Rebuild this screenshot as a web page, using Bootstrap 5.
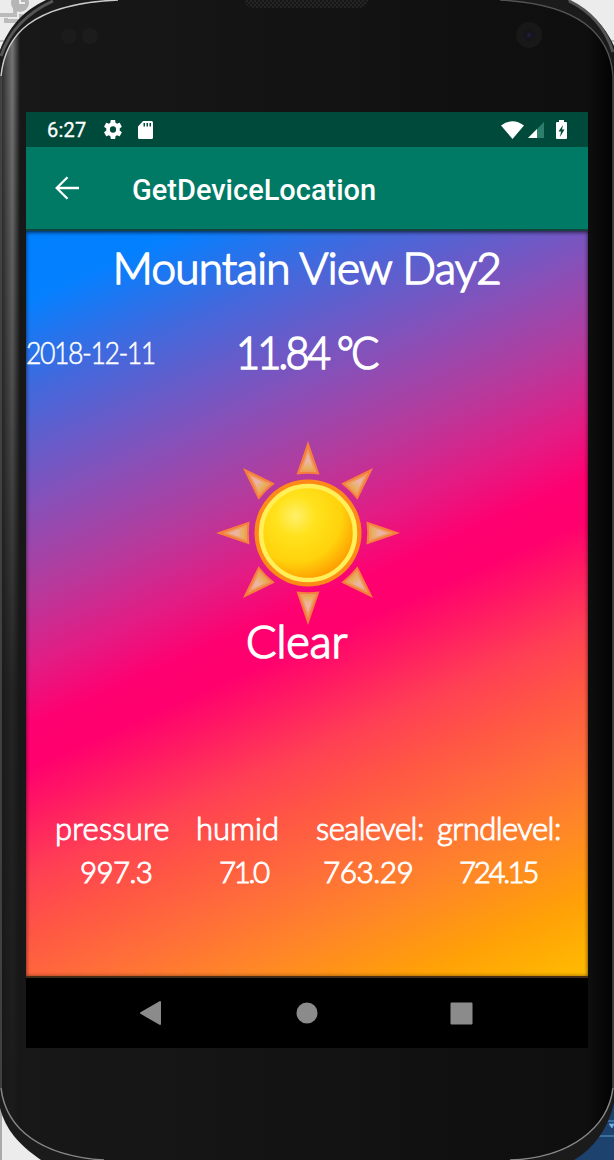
<!DOCTYPE html>
<html lang="en">
<head>
<meta charset="utf-8">
<title>GetDeviceLocation</title>
<link href="https://cdn.jsdelivr.net/npm/bootstrap@5.3.0/dist/css/bootstrap.min.css" rel="stylesheet">
<style>
body{margin:0;width:614px;height:1160px;background:#111;font-family:Roboto,"Liberation Sans",sans-serif}
.device{width:614px;height:1160px;padding:112px 26px 0}
.shell{left:0;top:0;z-index:0}
.screen{width:562px;height:936px;z-index:1;background:#000}
.statusbar{height:35px;background:#004a3b;padding:0 21px 0 21px}
.clock{font-size:20px;-webkit-text-stroke:.3px #fff;line-height:35px;width:57px;padding-top:1px;letter-spacing:.2px}
.appbar{height:82px;background:#007965;padding-left:28px}
.apptitle{font-size:29px;font-weight:500;line-height:82px;margin-left:52px;padding-top:3px}
.weather{height:749px;padding-top:6px;border-top:2px solid #14443f;border-bottom:2px solid #442d18;color:#fff;font-family:Lato,"Noto Sans",sans-serif;font-weight:300;
background:linear-gradient(156deg,#0080ff 0,#0480ff 7%,#4269dd 16%,#8750b8 28%,#b33c9e 36%,#e21c84 44%,#ff0070 50%,#ff006e 54%,#ff1664 58%,#ff4054 65%,#ff5744 71%,#ff6d3a 77%,#ff8628 84%,#ffa008 92%,#ffbc00 100%);
box-shadow:inset 0 2px 4px -1px #0009,inset 0 0 4px #0006}
.weather span{display:inline-block;white-space:nowrap;transform-origin:0 50%}
.hand{-webkit-text-stroke:1.7px #fff}
.place{font-size:44px;line-height:60px;height:64px}
.place span{letter-spacing:-.65px}
.readings{height:92px;padding-top:9px}
.date{font-size:31px;line-height:64px;width:210px;-webkit-text-stroke:.5px #fff}
.date span{letter-spacing:-1.7px;transform:scaleX(.86)}
.temp{font-size:46px;line-height:62px}
.temp span{letter-spacing:-3px;transform:scaleX(.9)}
.sun{width:184px;height:184px;margin:48px 0 0 190px}
.sky{font-size:45px;line-height:50px;height:50px;margin-top:-9px;padding-left:220px}
.stats{margin-top:140px;height:90px;font-size:31px;-webkit-text-stroke:1px #fff}
.stats .pressure{letter-spacing:.2px}
.stats .level{letter-spacing:-.55px}
.stats .val{font-size:29.500px}
.stats .val span{letter-spacing:-.6px}
.stats .val .wide{letter-spacing:-.5px;transform:scaleX(1.010)}
.stats .val .slim{letter-spacing:-2.400px}
.stats div div{height:44px;line-height:44px}
.navkeys{height:70px}
</style>
</head>
<body>
<main class="device position-relative overflow-hidden">
<svg class="shell position-absolute" width="614" height="1160" viewBox="0 0 614 1160">
<defs>
<linearGradient id="face"><stop offset="0" stop-color="#181818"/><stop offset="1" stop-color="#0e0e0e"/></linearGradient>
<linearGradient id="side"><stop offset="0" stop-color="#292929"/><stop offset=".6" stop-color="#777"/><stop offset="1" stop-color="#181818"/></linearGradient>
<linearGradient id="fade" x2="0" y2="1"><stop offset="0" stop-color="#161616" stop-opacity="0"/><stop offset=".25" stop-color="#161616" stop-opacity=".3"/><stop offset=".6" stop-color="#161616" stop-opacity=".85"/><stop offset="1" stop-color="#161616" stop-opacity=".95"/></linearGradient>
<linearGradient id="right"><stop offset="0" stop-color="#0e0e0e"/><stop offset="1" stop-color="#020202"/></linearGradient>
<pattern id="mesh" width="4" height="4" patternUnits="userSpaceOnUse"><rect width="4" height="4" fill="#242424"/><circle cx="1" cy="1" r="1" fill="#111"/><circle cx="3" cy="3" r="1" fill="#111"/></pattern>
</defs>
<rect width="614" height="1160" fill="#ececec"/>
<path d="M0 15H15V0M6 18V21H21V14" fill="none" stroke="#bbb" stroke-width="4"/>
<circle cx="20" cy="3" r="9" fill="#b5b5b5"/><path d="M20-2V3H25" stroke="#eee" stroke-width="2" fill="none"/>
<path d="M0 41H6M608 41H614" stroke="#888"/>
<path d="M560 1100H614V1160H560Z" fill="#1d426d"/><path d="M600 1121H614M595 1136H614M609 1124H614L612 1128Z" stroke="#5d9ad5" fill="#8dbce9"/>
<path d="M0 1100H2V1160H0Z" fill="#aaa"/>
<path d="M0 50C8 29 22 11 46 0H568C590 10 605 26 614 46V1103C608 1129 594 1148 574 1160H41C18 1144 6 1130 0 1108Z" fill="#1b1b1b"/>
<path d="M1 56C9 32 27 13 53 1M569 1C592 12 606 30 613 52" fill="none" stroke="#555" stroke-width="3"/>
<path d="M1 76C5 36 30 4 118 0H500C580 4 610 34 613 76V1088C608 1128 570 1158 510 1160H104C42 1156 6 1130 1 1088Z" fill="url(#face)"/>
<path d="M1 76C2 57 9 43 20 31V1129C9 1116 3 1103 1 1088Z" fill="url(#side)"/>
<path d="M1 76C2 57 9 43 20 31V1129C9 1116 3 1103 1 1088Z" fill="url(#fade)"/>
<path d="M588 26C605 38 611 55 613 76V1088C610 1105 603 1120 588 1134Z" fill="url(#right)"/>
<path d="M1 76C5 36 30 4 118 0" fill="none" stroke="#ccc" stroke-width="1.5"/>
<path d="M500 0C580 4 610 34 613 76V1088M1 76V1088" fill="none" stroke="#555" stroke-width="1.3"/>
<path d="M1 1088C6 1130 42 1156 104 1160M510 1160C570 1158 608 1128 613 1088" fill="none" stroke="#888" stroke-width="1.5"/>
<path d="M244 0H368Q366 8 358 8H254Q246 8 244 0Z" fill="url(#mesh)"/>
<circle cx="69" cy="36" r="8" fill="#1b1b1b"/><circle cx="90" cy="36" r="8" fill="#1c1c1c"/>
<circle cx="529" cy="35" r="13" fill="#181818"/><circle cx="529" cy="35" r="6" fill="#15151b"/><circle cx="529" cy="35" r="2" fill="#201a3d"/>
</svg>
<section class="screen position-relative d-flex flex-column">
<div class="statusbar d-flex align-items-center text-white">
<span class="clock">6:27</span>
<svg width="18" height="19" viewBox="2 2 20 20" fill="#fff" preserveAspectRatio="none"><path fill-rule="evenodd" d="M19.4 13l.1-1-.1-1 2.1-1.7c.2-.1.2-.4.1-.6l-2-3.5c-.1-.2-.4-.3-.6-.2l-2.5 1c-.5-.4-1.1-.7-1.7-1L14.400 2.400c0-.2-.2-.4-.5-.4h-4c-.2 0-.4.2-.5.4L9.100 5c-.6.2-1.200.6-1.700 1l-2.500-1c-.2-.1-.5 0-.6.2l-2 3.500c-.1.2-.1.400.1.600L4.600 11l-.1 1 .1 1-2.200 1.700c-.2.1-.2.400-.1.600l2 3.500c.1.200.4.300.6.200l2.500-1c.5.400 1.100.7 1.700 1l.4 2.600c0 .2.2.4.5.4h4c.2 0 .4-.2.5-.4l.3-2.600c.6-.3 1.200-.6 1.700-1l2.500 1c.2.100.5 0 .6-.2l2-3.500c.1-.2.1-.500-.1-.6zM12 8.600A3.400 3.400 0 1 1 12 15.400A3.400 3.400 0 1 1 12 8.600Z"/></svg>
<svg class="ms-3" width="15" height="18" viewBox="0 0 15 18"><path fill="#fff" fill-rule="evenodd" d="M5 0H13.500Q15 0 15 1.500V16.500Q15 18 13.500 18H1.500Q0 18 0 16.500V5.500ZM5.500 2V5.500H7V2ZM8.500 2V5.500H10V2ZM11.500 2V5.500H13V2Z"/></svg>
<div class="ms-auto d-flex align-items-center">
<svg width="23" height="18" viewBox="0 0 23 18"><path fill="#fff" d="M0 4.500Q11.500-4 23 4.500L11.500 18Z"/></svg>
<svg style="margin-left:4px" width="16" height="17" viewBox="0 0 16 17"><path fill="#2d7e6c" d="M0 17L16 1V17Z"/><path fill="#fff" d="M0 17L9 8V17Z"/></svg>
<svg style="margin-left:12px" width="11" height="19" viewBox="0 0 11 19"><path fill="#fff" d="M3 0H8V2H10Q11 2 11 3V18Q11 19 10 19H1Q0 19 0 18V3Q0 2 1 2H3Z"/><path fill="#004a3b" d="M7 5L2.500 11.500H5L4 17L8.500 9.500H6Z"/></svg>
</div></div>
<header class="appbar d-flex align-items-center text-white">
<svg width="26" height="26" viewBox="0 0 26 26" fill="none" stroke="#fff" stroke-width="2.300"><path d="M25 13H3M13.500 2.200L2.700 13L13.500 23.800"/></svg>
<div class="apptitle">GetDeviceLocation</div>
</header>
<div class="weather">
<div class="place hand text-center"><span>Mountain View Day2</span></div>
<div class="readings d-flex align-items-center"><div class="date"><span>2018-12-11</span></div><div class="temp hand"><span>11.84 °C</span></div></div>
<svg class="sun d-block" viewBox="-92 -92 184 184">
<defs><radialGradient id="gold" cx=".37" cy=".32" r=".72"><stop offset="0" stop-color="#fff06a"/><stop offset=".3" stop-color="#ffe21c"/><stop offset=".68" stop-color="#ffd20c"/><stop offset="1" stop-color="#ff9800"/></radialGradient>
<linearGradient id="rayfill" x2="0" y2="1"><stop offset="0" stop-color="#f4a8a8"/><stop offset=".5" stop-color="#edb5a5"/><stop offset="1" stop-color="#e7ae4c"/></linearGradient>
<g id="ray"><path d="M0-92L11.500-58.500Q0-60 -11.500-58.500Z" fill="#f77e3c"/><path d="M0-85L8.500-61H-8.500Z" fill="#eb9e60"/><path d="M0-80L6-63H-6Z" fill="url(#rayfill)"/></g></defs>
<use href="#ray"/><use href="#ray" transform="rotate(45)"/><use href="#ray" transform="rotate(90)"/><use href="#ray" transform="rotate(135)"/><use href="#ray" transform="rotate(180)"/><use href="#ray" transform="rotate(225)"/><use href="#ray" transform="rotate(270)"/><use href="#ray" transform="rotate(315)"/>
<circle r="53.500" fill="#ff8a18"/><circle r="47" fill="url(#gold)" stroke="#fff05a" stroke-width="4.500"/>
</svg>
<div class="sky hand"><span>Clear</span></div>
<div class="stats d-flex">
<div style="width:141px;padding-left:29px"><div><span class="pressure">pressure</span></div><div class="val" style="padding-left:25px"><span>997.3</span></div></div>
<div style="width:121px;padding-left:29px"><div><span>humid</span></div><div class="val" style="padding-left:23px"><span class="slim">71.0</span></div></div>
<div style="width:141px;padding-left:28px"><div><span class="level">sealevel:</span></div><div class="val" style="padding-left:7px"><span class="wide">763.29</span></div></div>
<div style="width:159px;padding-left:8px"><div><span class="level">grndlevel:</span></div><div class="val" style="padding-left:22px"><span class="slim">724.15</span></div></div>
</div>
</div>
<nav class="navkeys d-flex align-items-center" aria-label="Navigation">
<svg width="562" height="70" viewBox="0 0 562 70" fill="#8b8b8b" stroke="#8b8b8b" stroke-linejoin="round" stroke-width="2"><path d="M115 35L134 24V46Z"/><circle cx="281" cy="35" r="9.500"/><rect x="425.500" y="25.500" width="20" height="20"/></svg>
</nav>
</section>
</main>
<script src="https://cdn.jsdelivr.net/npm/bootstrap@5.3.0/dist/js/bootstrap.bundle.min.js"></script>
</body>
</html>
